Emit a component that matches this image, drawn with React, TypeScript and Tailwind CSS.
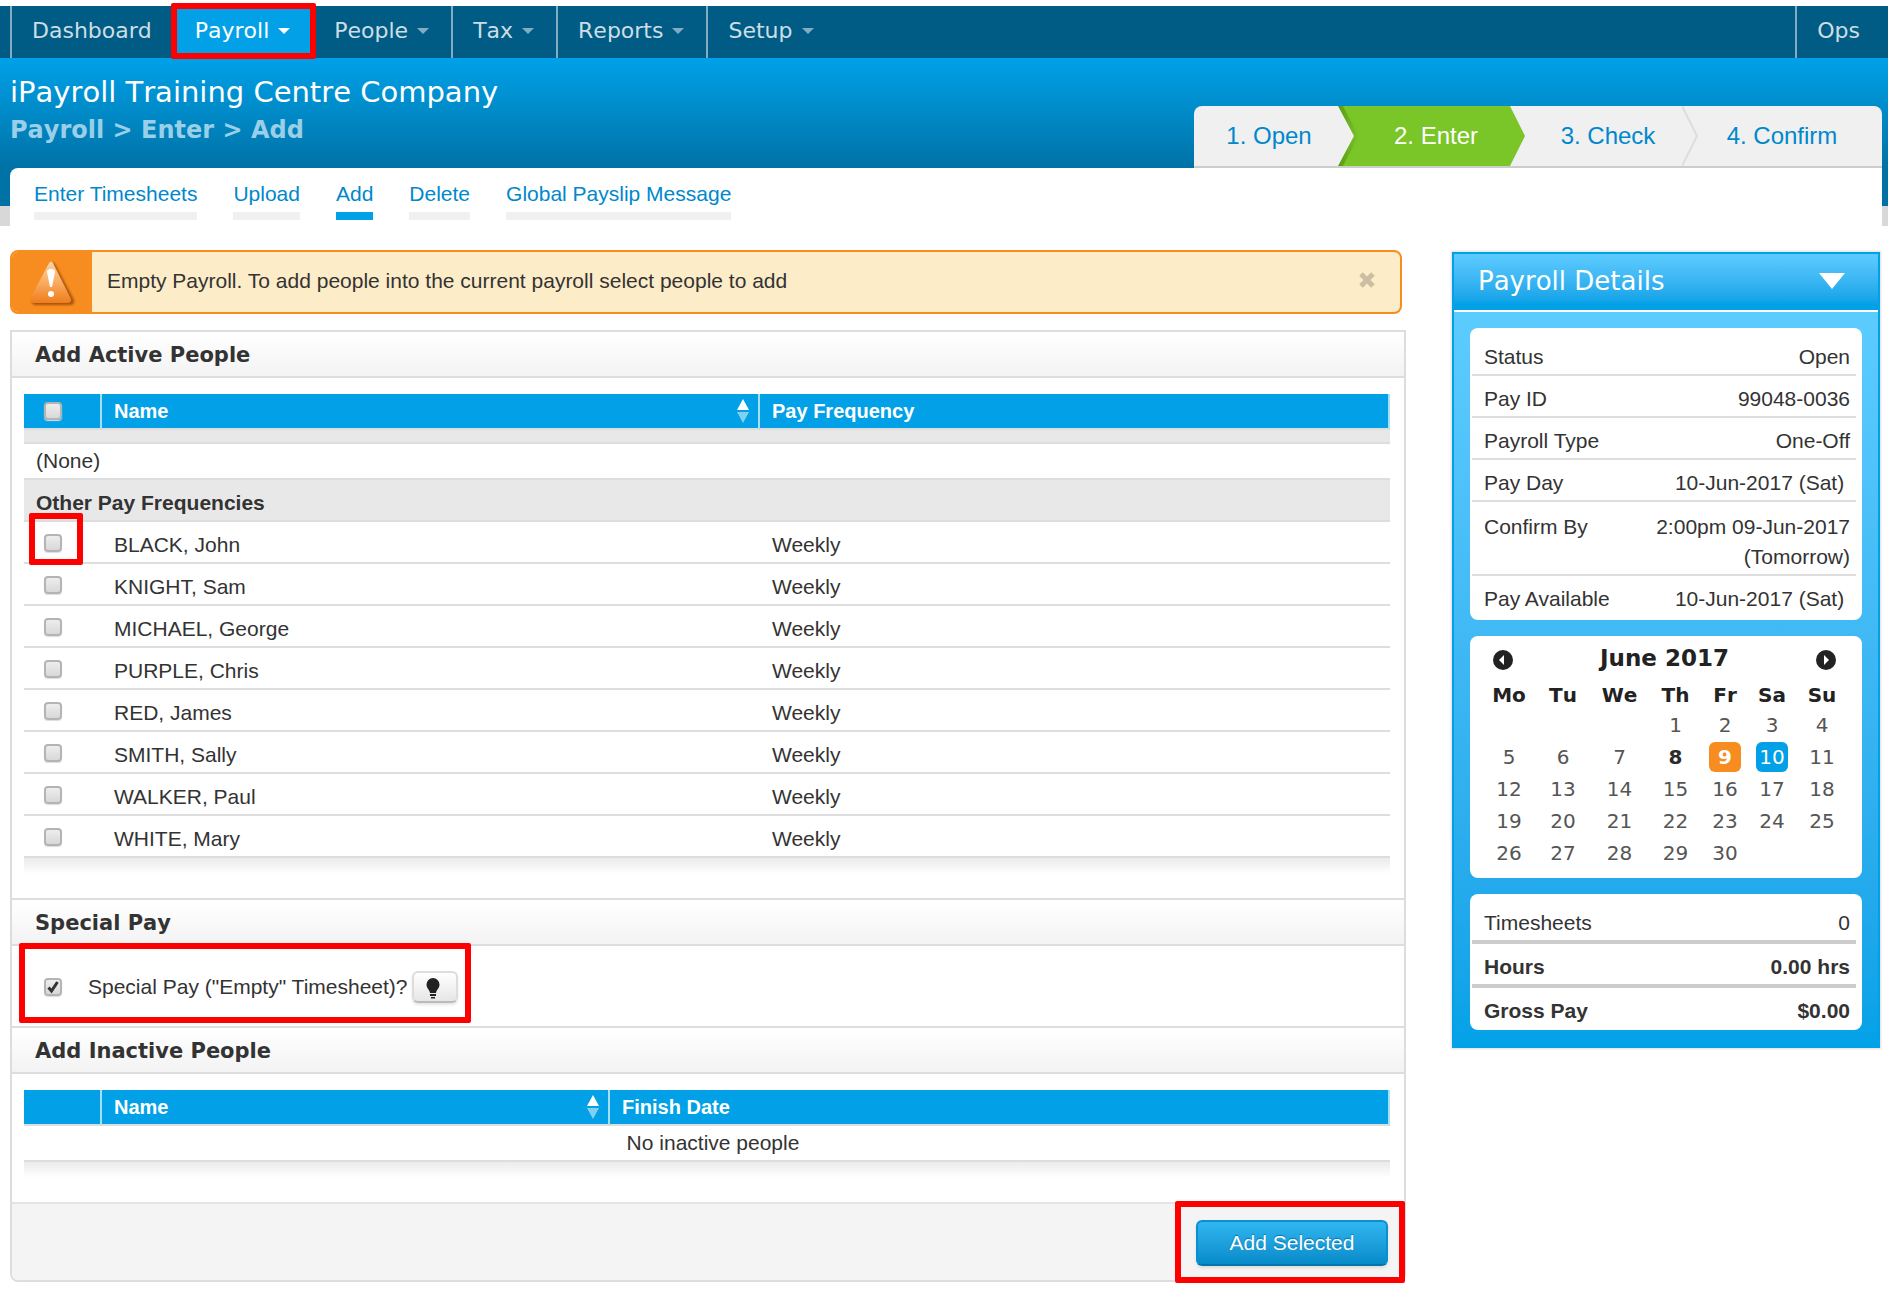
import type { ReactNode } from "react";

interface NavItem {
  label: string;
  menu: boolean;
  active?: boolean;
}

const NAV_ITEMS: NavItem[] = [
  { label: "Dashboard", menu: false },
  { label: "Payroll", menu: true, active: true },
  { label: "People", menu: true },
  { label: "Tax", menu: true },
  { label: "Reports", menu: true },
  { label: "Setup", menu: true },
];

const TABS = ["Enter Timesheets", "Upload", "Add", "Delete", "Global Payslip Message"];

const PEOPLE = [
  { name: "BLACK, John", frequency: "Weekly" },
  { name: "KNIGHT, Sam", frequency: "Weekly" },
  { name: "MICHAEL, George", frequency: "Weekly" },
  { name: "PURPLE, Chris", frequency: "Weekly" },
  { name: "RED, James", frequency: "Weekly" },
  { name: "SMITH, Sally", frequency: "Weekly" },
  { name: "WALKER, Paul", frequency: "Weekly" },
  { name: "WHITE, Mary", frequency: "Weekly" },
];

const DETAILS = [
  { label: "Status", value: "Open" },
  { label: "Pay ID", value: "99048-0036" },
  { label: "Payroll Type", value: "One-Off" },
  { label: "Pay Day", value: "10-Jun-2017 (Sat)\u00a0" },
  { label: "Confirm By", value: "2:00pm 09-Jun-2017 (Tomorrow)", tall: true },
  { label: "Pay Available", value: "10-Jun-2017 (Sat)\u00a0" },
];

const WEEKDAYS = [
  { label: "Mo", width: "w-[54px]" },
  { label: "Tu", width: "w-[54px]" },
  { label: "We", width: "w-[59px]" },
  { label: "Th", width: "w-[53px]" },
  { label: "Fr", width: "w-[46px]" },
  { label: "Sa", width: "w-[48px]" },
  { label: "Su", width: "w-[52px]" },
];

// June 2017 starts on a Thursday
const WEEKS = Array.from({ length: 5 }, (_, week) =>
  Array.from({ length: 7 }, (_, day) => {
    const date = week * 7 + day - 2;
    return date >= 1 && date <= 30 ? date : null;
  })
);

const DAY_STYLES: Record<number, string> = {
  8: "font-bold text-[#2b2b2b]",
  9: "rounded-md bg-[#f78d20] font-bold text-white",
  10: "rounded-md bg-[#02a1e7] text-white",
};

const VERDANA = "font-['DejaVu_Sans',Verdana,sans-serif] [font-kerning:none]";

function Caret() {
  return (
    <svg width="14" height="6" viewBox="0 0 14 6" className="ml-2 fill-current" aria-hidden="true">
      <path d="M1 0h12L7 6z" />
    </svg>
  );
}

function Highlight({ className }: { className: string }) {
  return <span className={`pointer-events-none absolute z-10 rounded-xs border-6 border-[#ff0000] ${className}`} />;
}

function Checkbox({ id, label, defaultChecked }: { id?: string; label?: string; defaultChecked?: boolean }) {
  return (
    <span className="relative block size-[18px] shrink-0">
      <input
        id={id}
        type="checkbox"
        aria-label={label}
        defaultChecked={defaultChecked}
        className="peer block size-[18px] appearance-none rounded-[4px] border-2 border-[#b4b4b4] bg-linear-to-b from-[#ededed] to-[#d8d8d8] shadow-[0_1px_1px_#ddd]"
      />
      <svg
        viewBox="0 0 18 18"
        className="pointer-events-none absolute inset-0 hidden fill-none stroke-[#333] peer-checked:block"
        aria-hidden="true"
      >
        <path d="M4.5 9.5l3 3.5 6-9" strokeWidth="3" />
      </svg>
    </span>
  );
}

function SortIcon() {
  return (
    <svg width="14" height="26" viewBox="0 0 14 26" aria-hidden="true">
      <path d="M7 1l6 11H1z" fill="#fff" />
      <path d="M7 25l6-11H1z" fill="#80d0f3" />
    </svg>
  );
}

function SectionTitle({ first, children }: { first?: boolean; children: ReactNode }) {
  return (
    <h2
      className={`border-b-2 border-[#ddd] bg-linear-to-b from-white to-[#f3f3f3] pt-0.5 pl-[23px] leading-[42px] font-bold ${VERDANA} ${
        first ? "" : "border-t-2"
      }`}
    >
      {children}
    </h2>
  );
}

function HeadCell({ children, sortable }: { children?: ReactNode; sortable?: boolean }) {
  return (
    <th className="border-r-2 border-b-2 border-r-[#a6dff8] border-b-[#ddd] bg-[#02a1e7] bg-clip-padding p-0 pr-2 pl-3 text-left text-xl text-white">
      <div className="flex h-[34px] items-center justify-between">
        {children}
        {sortable && <SortIcon />}
      </div>
    </th>
  );
}

function TableShadow() {
  return <div className="mb-6 h-4 bg-linear-to-b from-[#ebebeb] to-white" />;
}

function TopNav() {
  return (
    <nav className="flex h-[52px] bg-[#005c84] text-[22px] leading-[50px]">
      <div className={`ml-2.5 flex border-l-2 border-[#80adc1] ${VERDANA}`}>
        {NAV_ITEMS.map((item, i) => (
          <div
            key={item.label}
            className={`relative ${i < NAV_ITEMS.length - 1 ? "border-r-2 border-[#80adc1]" : ""} ${
              item.active ? "bg-[#02a1e7]" : ""
            }`}
          >
            <a href="#" className={`flex items-center pr-[21px] pl-5 ${item.active ? "text-white" : "text-[#ccdee6]"}`}>
              {item.label}
              {item.menu && (
                <span className={item.active ? "" : "text-[#80adc1]"}>
                  <Caret />
                </span>
              )}
            </a>
            {item.active && <Highlight className="-inset-x-1 -top-[3px] -bottom-px" />}
          </div>
        ))}
      </div>
      <a href="#" className={`ml-auto border-l-2 border-[#80adc1] pr-7 pl-5 text-[#ccdee6] ${VERDANA}`}>
        Ops
      </a>
    </nav>
  );
}

function Wizard() {
  return (
    <ol className="flex overflow-hidden rounded-t-lg border-b-2 border-[#ccc] bg-[#f0f0f0] text-center text-2xl leading-[60px] text-[#0088cc]">
      <li className="w-36 pl-1.5">
        <a href="#">1. Open</a>
      </li>
      <li className="relative w-43 bg-[#7ac528] pl-6 text-white">
        <svg width="22" height="60" viewBox="0 0 22 60" className="absolute top-0 left-0" aria-hidden="true">
          <defs>
            <linearGradient id="notch" x1="0" x2="1" y1="0" y2="0">
              <stop offset="0" stopColor="#5a9a17" />
              <stop offset="1" stopColor="#7ac528" />
            </linearGradient>
          </defs>
          <path d="M0 0h5l16 30L5 60H0z" fill="url(#notch)" />
          <path d="M0 0l16 30L0 60z" fill="#f0f0f0" />
        </svg>
        <a href="#" aria-current="step">
          2. Enter
        </a>
        <svg width="16" height="60" viewBox="0 0 16 60" className="absolute top-0 left-full" aria-hidden="true">
          <path d="M0 0l15 30L0 60z" fill="#7ac528" />
        </svg>
      </li>
      <li className="relative w-43 pl-6">
        <a href="#">3. Check</a>
        <svg width="16" height="60" viewBox="0 0 16 60" className="absolute top-0 left-full" aria-hidden="true">
          <path d="M0 0l15 30L0 60" fill="none" stroke="#ddd" strokeWidth="2" />
        </svg>
      </li>
      <li className="w-50">
        <a href="#">4. Confirm</a>
      </li>
    </ol>
  );
}

function PageHeader() {
  return (
    <header className="bg-[linear-gradient(#00a1e8,#0072a6_110px,#0072a6_148px,#d8d8d8_148px)] pr-1.5 pl-2.5">
      <div className="flex h-[110px] items-end justify-between">
        <div className={`self-start pt-[15px] ${VERDANA}`}>
          <h1 className="text-[29px] leading-[38px] text-white">iPayroll Training Centre Company</h1>
          <p className="text-2xl leading-[38px] font-bold text-[#99cfe8]">Payroll &gt; Enter &gt; Add</p>
        </div>
        <Wizard />
      </div>
      <nav className="flex h-[58px] gap-9 rounded-tl-lg bg-white px-6 pt-2.5">
        {TABS.map((tab) => (
          <a
            key={tab}
            href="#"
            className={`h-[42px] border-b-8 leading-8 text-[#0088cc] ${
              tab === "Add" ? "border-[#02a1e7]" : "border-[#f0f0f0]"
            }`}
          >
            {tab}
          </a>
        ))}
      </nav>
    </header>
  );
}

function WarningIcon() {
  return (
    <svg width="50" height="50" viewBox="0 0 50 50" className="mt-1" aria-hidden="true">
      <defs>
        <linearGradient id="warn" x1="0" x2="0" y1="0" y2="1">
          <stop offset="0" stopColor="#fbd3a8" />
          <stop offset="0.5" stopColor="#f9ac62" />
          <stop offset="1" stopColor="#f07d1a" />
        </linearGradient>
        <filter id="warnShadow" x="-20%" y="-20%" width="140%" height="140%">
          <feGaussianBlur stdDeviation="1" />
        </filter>
      </defs>
      <path d="M24 5q2-3 4 0l19 36q1 5-4 5H9q-5 0-4-5z" fill="#a85208" filter="url(#warnShadow)" />
      <path d="M22 4q2-3 4 0l18 36q1 4-4 4H7q-5 0-4-4z" fill="url(#warn)" />
      <path d="M20 13q0-3 4-3t4 3l-3 15h-2z" fill="#fff" />
      <circle cx="24" cy="35" r="3" fill="#fff" />
    </svg>
  );
}

function Alert() {
  return (
    <div role="alert" className="mr-1 mb-4 flex h-16 items-stretch overflow-hidden rounded-lg border-2 border-[#f78d20] bg-[#fdecc8]">
      <div className="flex w-20 items-center justify-center bg-[#f78d20]">
        <WarningIcon />
      </div>
      <p className="flex-1 pl-[15px] leading-[58px]">Empty Payroll. To add people into the current payroll select people to add</p>
      <button type="button" aria-label="Close" className="px-6 text-[#cabfa2]">
        <svg width="18" height="18" viewBox="0 0 18 18" className="mb-1" aria-hidden="true">
          <path d="M3 3l12 12M15 3L3 15" stroke="currentColor" strokeWidth="5" />
        </svg>
      </button>
    </div>
  );
}

function ActivePeople() {
  return (
    <div className="pt-4 pr-3.5 pl-3">
      <table className="w-full table-fixed border-separate border-spacing-0 leading-[34px]">
        <colgroup>
          <col className="w-[78px]" />
          <col className="w-[658px]" />
          <col />
        </colgroup>
        <thead>
          <tr>
            <HeadCell>
              <span className="ml-2">
                <Checkbox label="Select all people" />
              </span>
            </HeadCell>
            <HeadCell sortable>Name</HeadCell>
            <HeadCell>Pay Frequency</HeadCell>
          </tr>
        </thead>
        <tbody>
          <tr>
            <td colSpan={3} className="h-3.5 border-b-2 border-[#ddd] bg-[#e8e8e8] p-0" />
          </tr>
          <tr>
            <td colSpan={3} className="border-b-2 border-[#ddd] p-0 pl-3">
              (None)
            </td>
          </tr>
          <tr>
            <th colSpan={3} className="border-b-2 border-[#ddd] bg-[#e8e8e8] p-0 pt-1.5 pl-3 text-left">
              Other Pay Frequencies
            </th>
          </tr>
          {PEOPLE.map((person, i) => (
            <tr key={person.name}>
              <td className="relative border-b-2 border-[#ddd] p-0 pt-0.5 pl-5 align-middle">
                <Checkbox label={`Select ${person.name}`} />
                {i === 0 && <Highlight className="-top-[9px] left-[5px] h-[52px] w-[54px]" />}
              </td>
              <td className="border-b-2 border-[#ddd] p-0 pt-1.5 pl-3">{person.name}</td>
              <td className="border-b-2 border-[#ddd] p-0 pt-1.5 pl-3">{person.frequency}</td>
            </tr>
          ))}
        </tbody>
      </table>
      <TableShadow />
    </div>
  );
}

function SpecialPay() {
  return (
    <div className="relative flex h-20 items-center pt-0.5 pl-8">
      <Checkbox id="special-pay" defaultChecked />
      <label htmlFor="special-pay" className="mr-1 ml-[26px]">
        Special Pay ("Empty" Timesheet)?
      </label>
      <button
        type="button"
        aria-label="Help"
        className="flex h-8 w-[46px] items-center justify-center rounded-md border-2 border-[#ddd] border-b-[#bbb] bg-linear-to-b from-white to-[#e6e6e6] shadow-[0_2px_3px_#e4e4e4]"
      >
        <svg width="16" height="22" viewBox="0 0 16 22" className="mt-0.5 mr-1" fill="#222" aria-hidden="true">
          <path d="M8 1a6.5 6.5 0 0 1 6.5 6.5c0 4-3 5-3.5 8.5H5c-.5-3.5-3.5-4.500-3.500-8.500A6.500 6.500 0 0 1 8 1z" />
          <path d="M5 17h6v2H5zM6 20h4v1.500H6z" />
        </svg>
      </button>
      <Highlight className="-top-[3px] left-[7px] h-20 w-[452px]" />
    </div>
  );
}

function InactivePeople() {
  return (
    <div className="pt-4 pr-3.5 pl-3">
      <table className="w-full table-fixed border-separate border-spacing-0 leading-[34px]">
        <colgroup>
          <col className="w-[78px]" />
          <col className="w-[508px]" />
          <col />
        </colgroup>
        <thead>
          <tr>
            <HeadCell />
            <HeadCell sortable>Name</HeadCell>
            <HeadCell>Finish Date</HeadCell>
          </tr>
        </thead>
        <tbody>
          <tr>
            <td colSpan={3} className="border-b-2 border-[#ddd] p-0 pl-3 text-center">
              No inactive people
            </td>
          </tr>
        </tbody>
      </table>
      <TableShadow />
    </div>
  );
}

function MonthButton({ next }: { next?: boolean }) {
  return (
    <button type="button" aria-label={next ? "Next month" : "Previous month"}>
      <svg width="20" height="20" viewBox="0 0 20 20" className="mt-1" aria-hidden="true">
        <circle cx="10" cy="10" r="10" fill="#222" />
        <path d={next ? "M8 5v10l5-5z" : "M11 5v10l-5-5z"} fill="#fff" />
      </svg>
    </button>
  );
}

function Calendar() {
  return (
    <div className={`rounded-lg bg-white pt-[7px] pr-3.5 pb-[9px] pl-3 text-xl ${VERDANA}`}>
      <div className="mb-2 flex h-[30px] items-center justify-between pr-3 pl-[11px] text-[#222]">
        <MonthButton />
        <h3 className="text-[23px] leading-[30px] font-bold">June 2017</h3>
        <MonthButton next />
      </div>
      <table className="w-full table-fixed text-center text-[#555]">
        <thead>
          <tr className="text-[#222]">
            {WEEKDAYS.map((day) => (
              <th key={day.label} className={`p-0 leading-7 ${day.width}`}>
                {day.label}
              </th>
            ))}
          </tr>
        </thead>
        <tbody>
          {WEEKS.map((week, i) => (
            <tr key={i}>
              {week.map((date, j) => (
                <td key={j} className="h-8 p-0">
                  {date && <span className={`mx-auto block w-8 leading-[30px] ${DAY_STYLES[date] ?? ""}`}>{date}</span>}
                </td>
              ))}
            </tr>
          ))}
        </tbody>
      </table>
    </div>
  );
}

function PayrollDetails() {
  return (
    <aside className="mt-0.5 w-[428px] shrink-0 border-2 border-[#02a1e7] shadow-[0_0_2px_1px_#ddd]">
      <div className={`flex h-[58px] items-center justify-between border-b-2 border-white bg-linear-to-b from-[#5cccff] to-[#02a1e7] to-90% pr-8 pb-0.5 pl-6 text-white ${VERDANA}`}>
        <h2 className="text-[26px]">Payroll Details</h2>
        <button type="button" aria-label="Collapse payroll details">
          <svg width="28" height="16" viewBox="0 0 28 16" className="fill-current" aria-hidden="true">
            <path d="M1 0h26L14 16z" />
          </svg>
        </button>
      </div>
      <div className="flex flex-col gap-4 bg-linear-to-b from-[#5cccff] to-[#02a1e7] p-4 leading-[30px]">
        <dl className="rounded-lg bg-white pt-1.5 pr-1.5 pb-1 pl-0.5">
          {DETAILS.map((row) => (
            <div
              key={row.label}
              className={`flex justify-between border-b-2 border-[#ddd] pr-1.5 pb-0.5 pl-3 last:border-b-0 ${
                row.tall ? "pt-2.5" : "pt-2"
              }`}
            >
              <dt>{row.label}</dt>
              <dd className="w-52 text-right">{row.value}</dd>
            </div>
          ))}
        </dl>
        <Calendar />
        <dl className="rounded-lg bg-white pt-1.5 pr-1.5 pb-0.5 pl-0.5">
          <div className="flex justify-between border-b-4 border-[#ccc] pt-2 pr-1.5 pb-0.5 pl-3">
            <dt>Timesheets</dt>
            <dd>0</dd>
          </div>
          <div className="flex justify-between border-b-4 border-[#ccc] pt-2 pr-1.5 pb-0.5 pl-3 font-bold">
            <dt>Hours</dt>
            <dd>0.00 hrs</dd>
          </div>
          <div className="flex justify-between pt-2 pr-1.5 pb-0.5 pl-3 font-bold">
            <dt>Gross Pay</dt>
            <dd>$0.00</dd>
          </div>
        </dl>
      </div>
    </aside>
  );
}

export default function App() {
  return (
    <div className="bg-white pt-1.5 pb-4 font-['Liberation_Sans',Arial,sans-serif] text-[21px] text-[#333]">
      <TopNav />
      <PageHeader />
      <div className="flex items-start gap-[46px] pt-6 pr-2 pl-2.5">
        <main className="min-w-0 flex-1">
          <Alert />
          <form className="rounded-b-lg border-2 border-[#ddd]">
            <SectionTitle first>Add Active People</SectionTitle>
            <ActivePeople />
            <SectionTitle>Special Pay</SectionTitle>
            <SpecialPay />
            <SectionTitle>Add Inactive People</SectionTitle>
            <InactivePeople />
            <div className="relative flex h-[78px] items-center justify-end rounded-b-md border-t-2 border-[#e4e4e4] bg-[#f4f4f4] pt-0.5 pr-4">
              <button
                type="button"
                className="h-[46px] w-48 rounded-md border-2 border-[#0a8fd0] border-b-[#0576ad] bg-linear-to-b from-[#2fb6f0] to-[#058bc9] text-white shadow-[0_2px_3px_#ddd] text-shadow-[0_-1px_1px_#0576ad]"
              >
                Add Selected
              </button>
              <Highlight className="-top-[3px] -right-px h-[82px] w-[230px]" />
            </div>
          </form>
        </main>
        <PayrollDetails />
      </div>
    </div>
  );
}
